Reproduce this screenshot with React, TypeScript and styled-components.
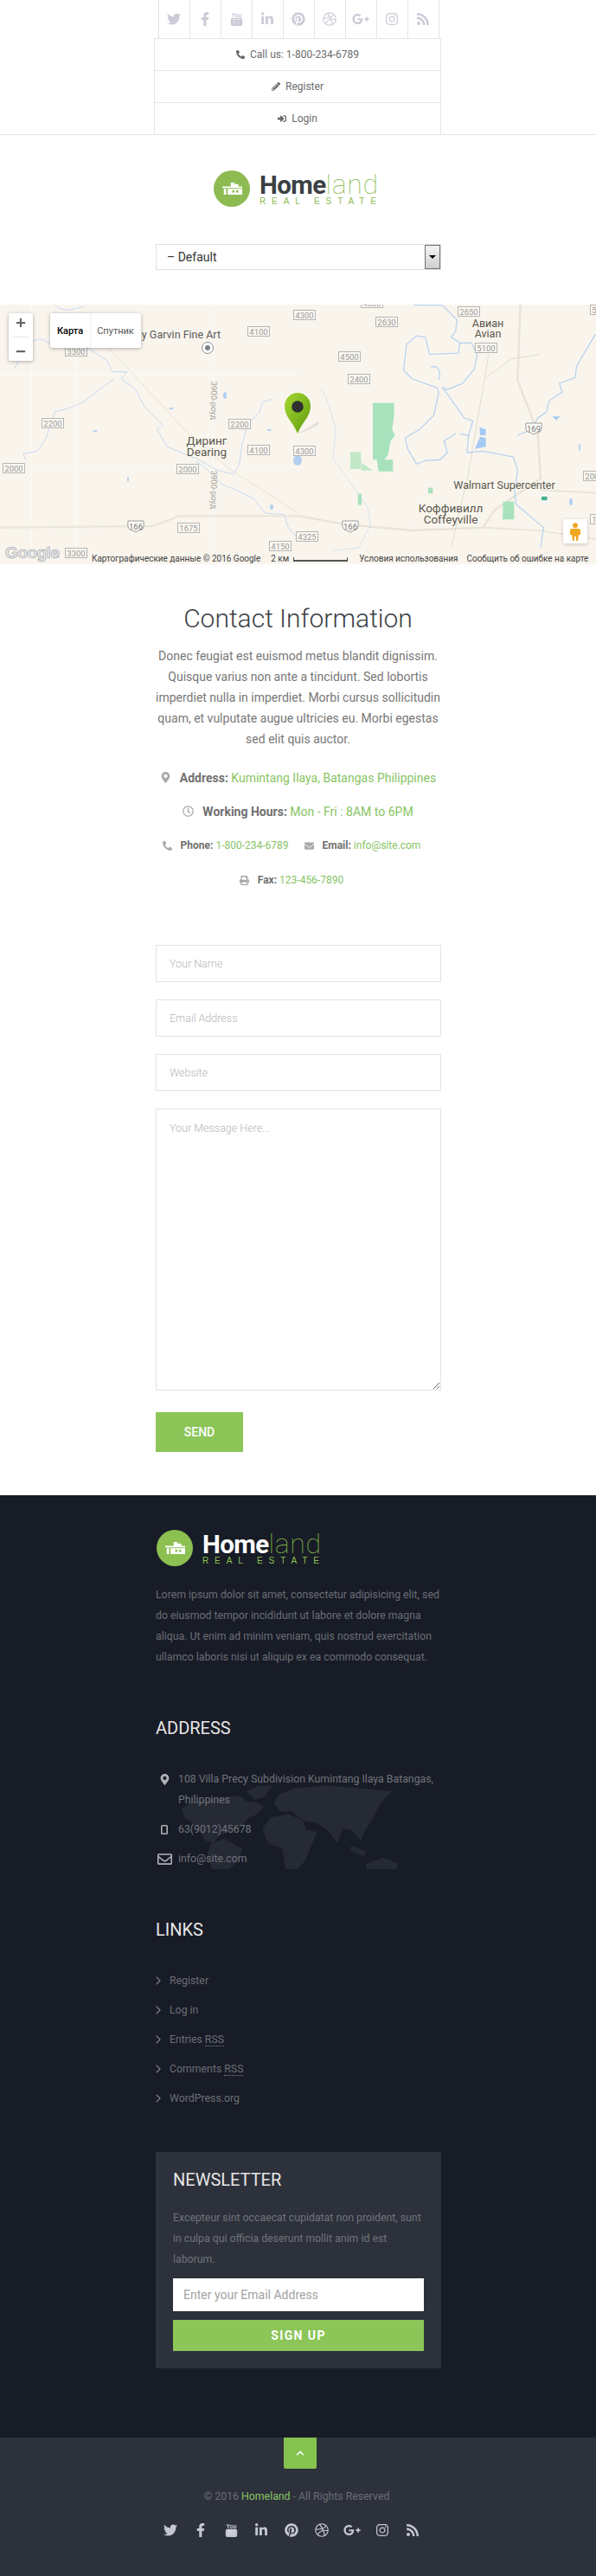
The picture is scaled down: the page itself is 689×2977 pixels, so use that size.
import React from 'react';
import styled, { createGlobalStyle } from 'styled-components';
import {
  FaTwitter,
  FaFacebookF,
  FaLinkedinIn,
  FaPinterest,
  FaDribbble,
  FaGooglePlusG,
  FaInstagram,
  FaRss,
  FaPhoneAlt,
  FaPencilAlt,
  FaSignInAlt,
  FaMapMarkerAlt,
  FaRegClock,
  FaEnvelope,
  FaPrint,
  FaRegEnvelope,
  FaPlus,
  FaMinus,
} from 'react-icons/fa';
import { ChevronRight, ChevronUp } from 'lucide-react';

const LINK = '#88c464';

const GlobalStyle = createGlobalStyle`
  html, body {
    margin: 0;
    padding: 0;
    background: #fff;
    font-family: Roboto, "Liberation Sans", sans-serif;
  }
  * { box-sizing: border-box; }
`;

const Page = styled.div`
  width: 689px;
  height: 2977px;
  overflow: hidden;
`;

const TopBar = styled.header`
  height: 156px;
  border-bottom: 1px solid #e5e5e5;
`;

const SocialRow = styled.div`
  display: flex;
  justify-content: center;
  height: 44px;
  padding-left: 1px;
`;

const SocialCell = styled.a`
  width: 36px;
  display: flex;
  align-items: center;
  justify-content: center;
  color: #ccccd8;
  font-size: 16px;
  border-right: 1px solid #e5e5e5;
  &:first-child { border-left: 1px solid #e5e5e5; width: 37px; }
`;

const TopLinks = styled.div`
  width: 332px;
  margin-left: 178px;
  border-left: 1px solid #e5e5e5;
  border-right: 1px solid #e5e5e5;
`;

const TopLink = styled.a`
  height: 37px;
  display: flex;
  align-items: center;
  justify-content: center;
  gap: 6px;
  font-size: 12px;
  color: #6b6b6b;
  border-top: 1px solid #e5e5e5;
  svg { font-size: 10px; color: #666; }
`;

const LogoWrap = styled.div<{ $left: number }>`
  display: flex;
  align-items: center;
  gap: 11px;
  padding-left: ${(p) => p.$left}px;
`;

const LogoBadge = styled.div`
  width: 42px;
  height: 42px;
  border-radius: 50%;
  background: #8dbb52;
  display: flex;
  align-items: center;
  justify-content: center;
`;

const FooterBadge = styled(LogoBadge)`
  background: #8cc152;
`;

const LogoText = styled.div`
  display: flex;
  flex-direction: column;
`;

const LogoWord = styled.div<{ $dark?: boolean }>`
  font-size: 29.5px;
  line-height: 28px;
  font-weight: 700;
  letter-spacing: -0.6px;
  color: ${(p) => (p.$dark ? '#ffffff' : '#3a4043')};
  span {
    font-size: 32px;
    font-weight: 100;
    color: ${(p) => (p.$dark ? '#7cb644' : '#8dbb52')};
    letter-spacing: 0.6px;
  }
`;

const LogoTag = styled.div<{ $dark?: boolean }>`
  font-family: "Liberation Sans", sans-serif;
  font-size: 10px;
  line-height: 9px;
  letter-spacing: 6.9px;
  white-space: nowrap;
  color: ${(p) => (p.$dark ? '#8cc152' : '#8dbb52')};
`;

const HeaderLogo = styled.div`
  padding-top: 41px;
`;

const SelectWrap = styled.div`
  margin: 43px 0 0 180px;
  width: 330px;
  height: 30px;
  border: 1px solid #e0e0e0;
  display: flex;
  align-items: center;
  justify-content: space-between;
  font-size: 14px;
  color: #333;
  padding-left: 12px;
`;

const SelectArrow = styled.div`
  width: 18px;
  height: 28px;
  border: 1px solid #707070;
  background: linear-gradient(#f4f4f4, #cfcfcf);
  display: flex;
  align-items: center;
  justify-content: center;
  &::after {
    content: '';
    border-left: 4px solid transparent;
    border-right: 4px solid transparent;
    border-top: 4px solid #000;
  }
`;

const MapBox = styled.section`
  position: relative;
  margin-top: 40px;
  height: 300px;
  background: #f9f5ed;
  overflow: hidden;
`;

const MapSvg = styled.svg`
  display: block;
`;

const ZoomControl = styled.div`
  position: absolute;
  left: 10px;
  top: 10px;
  width: 28px;
  height: 55px;
  background: #fff;
  border-radius: 2px;
  box-shadow: 0 1px 4px rgba(0, 0, 0, 0.3);
  display: flex;
  flex-direction: column;
  align-items: center;
  justify-content: space-around;
  color: #666;
  font-size: 12px;
`;

const ZoomDivider = styled.div`
  width: 20px;
  height: 1px;
  background: #e6e6e6;
`;

const MapTypes = styled.div`
  position: absolute;
  left: 58px;
  top: 10px;
  height: 40px;
  display: flex;
  background: #fff;
  border-radius: 2px;
  box-shadow: 0 1px 4px rgba(0, 0, 0, 0.3);
`;

const MapType = styled.div<{ $active?: boolean }>`
  display: flex;
  align-items: center;
  justify-content: center;
  width: ${(p) => (p.$active ? 46 : 59)}px;
  font-size: 11px;
  font-weight: ${(p) => (p.$active ? 500 : 400)};
  color: ${(p) => (p.$active ? '#000' : '#565656')};
  box-shadow: ${(p) => (p.$active ? '1px 0 2px rgba(0,0,0,0.08)' : 'none')};
`;

const PegMan = styled.div`
  position: absolute;
  left: 651px;
  top: 248px;
  width: 28px;
  height: 28px;
  background: #fff;
  border-radius: 2px;
  box-shadow: 0 1px 4px rgba(0, 0, 0, 0.2);
  display: flex;
  align-items: center;
  justify-content: center;
`;

const GoogleMark = styled.div`
  position: absolute;
  left: 6px;
  top: 276px;
  font-family: "Liberation Sans", sans-serif;
  font-size: 19px;
  line-height: 22px;
  font-weight: 700;
  letter-spacing: -0.5px;
  color: #e8eaee;
  -webkit-text-stroke: 0.6px #9a9da1;
`;

const Attribution = styled.div`
  position: absolute;
  left: 106px;
  right: 0;
  top: 287px;
  height: 13px;
  display: flex;
  align-items: center;
  font-size: 10px;
  color: #444;
  white-space: nowrap;
  background: rgba(249, 245, 237, 0.7);
`;

const AttrText = styled.span<{ $left?: number }>`
  margin-left: ${(p) => p.$left ?? 0}px;
  letter-spacing: -0.02px;
`;

const ScaleBar = styled.span`
  display: inline-block;
  width: 63px;
  height: 5px;
  margin: 1px 0 0 5px;
  border: 1px solid #555;
  border-width: 0 1px 2px 1px;
`;

const Contact = styled.section`
  width: 340px;
  margin: 0 auto;
  padding-top: 45px;
  text-align: center;
`;

const ContactTitle = styled.h2`
  margin: 0;
  font-size: 30px;
  line-height: 36px;
  font-weight: 300;
  color: #3c4146;
`;

const ContactText = styled.p`
  margin: 13px 0 0;
  font-size: 14px;
  line-height: 24px;
  color: #777;
`;

const InfoList = styled.div`
  margin-top: 13px;
  display: flex;
  flex-direction: column;
`;

const InfoRow = styled.div<{ $small?: boolean }>`
  height: ${(p) => (p.$small ? 40 : 39)}px;
  display: flex;
  justify-content: center;
  align-items: center;
  gap: 18px;
  padding-right: ${(p) => (p.$small ? 15 : 0)}px;
  font-size: ${(p) => (p.$small ? 12 : 14)}px;
  white-space: nowrap;
`;

const InfoItem = styled.div<{ $small?: boolean }>`
  display: flex;
  align-items: center;
  gap: 10px;
  color: ${LINK};
  b { color: #6f6f6f; font-weight: 700; }
  svg { color: #a9a9a9; font-size: ${(p) => (p.$small ? 11 : 13)}px; }
`;

const ContactForm = styled.form`
  width: 330px;
  margin: 55px 0 0 180px;
  display: flex;
  flex-direction: column;
  gap: 20px;
`;

const TextInput = styled.input`
  width: 330px;
  height: 43px;
  padding: 0 15px;
  border: 1px solid #e3e3e3;
  background: #fff;
  font-family: Roboto, sans-serif;
  font-size: 12.5px;
  font-weight: 300;
  &::placeholder { color: #b5b5b5; opacity: 1; }
`;

const MessageInput = styled.textarea`
  width: 330px;
  height: 326px;
  padding: 14px 15px;
  border: 1px solid #e3e3e3;
  background: #fff;
  font-family: Roboto, sans-serif;
  font-size: 12.5px;
  font-weight: 300;
  &::placeholder { color: #b5b5b5; opacity: 1; }
`;

const SendButton = styled.button`
  width: 101px;
  height: 46px;
  margin-top: 5px;
  border: 0;
  background: #8cc558;
  color: #fff;
  font-family: Roboto, sans-serif;
  font-size: 14px;
  font-weight: 500;
`;

const Footer = styled.footer`
  margin-top: 50px;
  height: 1089px;
  background: #181c27;
  padding: 40px 0 0 180px;
`;

const FooterCol = styled.div`
  width: 330px;
`;

const FooterText = styled.p`
  margin: 21px 0 0;
  font-size: 12.3px;
  line-height: 24px;
  color: #6c6e75;
`;

const FooterHead = styled.h3<{ $top: number }>`
  margin: ${(p) => p.$top}px 0 0;
  font-size: 20px;
  line-height: 24px;
  font-weight: 400;
  color: #e6e6e6;
`;

const AddressList = styled.div`
  position: relative;
  margin-top: 35px;
  height: 116px;
`;

const WorldMap = styled.svg`
  position: absolute;
  left: 10px;
  top: 6px;
`;

const AddressRow = styled.div<{ $gap: number }>`
  position: relative;
  display: flex;
  margin-bottom: ${(p) => p.$gap}px;
  font-size: 12.3px;
  line-height: 24px;
  color: #71737a;
`;

const AddressIcon = styled.div`
  flex: 0 0 20px;
  width: 20px;
  height: 24px;
  margin-right: 6px;
  display: flex;
  align-items: center;
  justify-content: center;
  color: #aeb0b5;
  font-size: 13px;
`;

const LinkList = styled.ul`
  list-style: none;
  margin: 30px 0 0;
  padding: 0;
`;

const LinkItem = styled.li`
  height: 34px;
  display: flex;
  align-items: center;
  gap: 5px;
  font-size: 12.3px;
  color: #6c6e75;
  margin-left: -5px;
  svg { color: #80828a; }
  abbr { margin-left: 3px; border-bottom: 1px dotted #80828a; text-decoration: none; line-height: 12px; }
`;

const Newsletter = styled.div`
  margin-top: 45px;
  width: 330px;
  height: 250px;
  background: #2d313b;
  padding: 20px;
`;

const NewsHead = styled.h3`
  margin: 0;
  font-size: 20px;
  line-height: 24px;
  font-weight: 400;
  color: #e6e6e6;
`;

const NewsText = styled.p`
  margin: 20px 0 0;
  font-size: 12.3px;
  line-height: 24px;
  color: #71737a;
`;

const NewsInput = styled.input`
  display: block;
  width: 290px;
  height: 38px;
  margin-top: 10px;
  padding: 0 12px;
  border: 0;
  background: #fff;
  font-family: Roboto, sans-serif;
  font-size: 14px;
  &::placeholder { color: #a2a2a2; opacity: 1; }
`;

const NewsButton = styled.button`
  display: block;
  width: 290px;
  height: 36px;
  margin-top: 10px;
  border: 0;
  background: #8cc558;
  color: #fff;
  font-family: Roboto, sans-serif;
  font-size: 14px;
  font-weight: 700;
  letter-spacing: 1.4px;
`;

const BottomBar = styled.div`
  height: 160px;
  background: #2d313b;
  display: flex;
  flex-direction: column;
  align-items: center;
`;

const ToTop = styled.a`
  width: 38px;
  height: 36px;
  margin-left: 5px;
  background: #85c34e;
  border-radius: 0 0 2px 2px;
  color: #fff;
  display: flex;
  align-items: center;
  justify-content: center;
`;

const Copyright = styled.div`
  margin-top: 20px;
  margin-right: 3px;
  font-size: 12.3px;
  line-height: 24px;
  color: #6c6e75;
  a { color: #88c464; }
`;

const FootSocial = styled.div`
  margin-top: 15px;
  margin-right: 15px;
  display: flex;
`;

const FootSocialItem = styled.a`
  width: 35px;
  height: 24px;
  display: flex;
  align-items: center;
  justify-content: center;
  color: #c3c7d4;
  font-size: 16px;
`;

const YoutubeIcon = () => (
  <svg width="15" height="16" viewBox="0 0 15 16" fill="currentColor">
    <text x="7.5" y="5.6" textAnchor="middle" fontSize="6.5" fontWeight="700" fontFamily="'Liberation Sans Narrow','Liberation Sans',sans-serif">You</text>
    <rect x="0.8" y="6.8" width="13.4" height="9.2" rx="2" />
    <path d="M3 8.5h9M4.5 8.5v5.5M7 10.5v3M10 10.5v3" stroke="#fff" strokeOpacity="0.55" strokeWidth="0.8" fill="none" />
  </svg>
);

const MobileIcon = () => (
  <svg width="8" height="11" viewBox="0 0 8 11" fill="none" stroke="currentColor" strokeWidth="1.6">
    <rect x="0.8" y="0.8" width="6.4" height="9.4" rx="0.8" />
  </svg>
);

const socials = [
  <FaTwitter key="tw" />,
  <FaFacebookF key="fb" />,
  <YoutubeIcon key="yt" />,
  <FaLinkedinIn key="in" />,
  <FaPinterest key="pin" />,
  <FaDribbble key="dr" />,
  <FaGooglePlusG key="gp" size={20} />,
  <FaInstagram key="ig" />,
  <FaRss key="rss" />,
];

const HouseIcon = ({ size }: { size: number }) => (
  <svg width={size} height={size * 0.62} viewBox="0 0 26 16" fill="#fff">
    <path d="M11 0h5v2h5v3h5v2H0V5h11z" />
    <path d="M2 8h3v8H2zM7 8h19v8H7zM13 10v3h3v-3zM18 10v3h3v-3z" fillRule="evenodd" />
  </svg>
);

const Logo = ({ dark, left }: { dark?: boolean; left: number }) => {
  const Badge = dark ? FooterBadge : LogoBadge;
  return (
    <LogoWrap $left={left}>
      <Badge>
        <HouseIcon size={23} />
      </Badge>
      <LogoText>
        <LogoWord $dark={dark}>
          Home<span>land</span>
        </LogoWord>
        <LogoTag $dark={dark}>REAL ESTATE</LogoTag>
      </LogoText>
    </LogoWrap>
  );
};

const roadBoxes: [string, number, number][] = [
  ['4100', 299, 31], ['3300', 88, 54], ['2200', 61, 137], ['2200', 277, 138],
  ['4100', 299, 168], ['2000', 16, 189], ['2000', 217, 190], ['1675', 218, 258],
  ['4150', 324, 279], ['3300', 88, 287], ['4300', 352, 12], ['4300', 352, 169],
  ['2650', 542, 8], ['2630', 447, 20], ['4500', 404, 60], ['2400', 415, 86],
  ['5100', 562, 50], ['4325', 355, 268], ['2000', 687, 198], ['1800', 695, 248],
  ['5500', 695, 6], ['4300', 430, -2],
];

const shields: [string, number, number][] = [
  ['166', 157, 256], ['166', 405, 256], ['169', 617, 143],
];

const placeLabels: [string, number, number, number][] = [
  ['Диринг', 239, 162, 13.5], ['Dearing', 239, 175, 13.5],
  ['Авиан', 564, 26, 12.5], ['Avian', 564, 38, 12.5],
  ['Walmart Supercenter', 583, 213, 12.5],
  ['Коффивилл', 521, 240, 13.5], ['Coffeyville', 521, 253, 13.5],
];

const leftWater = [
  'M190,38 C210,60 240,60 295,42',
  'M50,260 L65,230 L90,170 L140,155 L170,170 L230,170 L310,190 L370,230 L390,270 L440,270 L420,295 L470,330 L500,390 L550,440 L565,455 L545,470 L580,530 L640,555 L680,570 L750,610 L810,625 L830,590 L840,520 L860,450 L900,410 L910,375 L945,365',
  'M395,295 L340,335 L290,375 L240,395 L190,410 L160,500 L130,545 L80,555 L90,575',
  'M680,580 L720,610 L770,660 L820,680 L880,710 L920,760 L985,765 L1000,810 L1035,850',
];

const rightWaterThick = [
  'M400,38 L500,40 L550,90 L545,130 L530,150 L560,170',
  'M440,150 L410,145 L375,175 L365,265 L395,295 L480,325 L487,340 L470,420 L420,470 L370,500 L380,540 L410,590 L440,578 L490,575 L517,550 L505,510 L545,485',
  'M440,150 L455,210 L555,205 L560,170 L600,170 L620,210 L610,260 L570,310 L515,332 L500,325 L540,380 L575,430 L605,440 L590,490 L560,485',
  'M590,490 L585,550 L640,545 L745,565 L760,610 L750,690 L755,730 L850,810 L840,880',
  'M1030,140 L965,250 L960,290 L905,310 L915,340 L870,370 L860,410 L830,430 L810,470 L760,490',
  'M460,255 C480,245 495,260 488,298',
];

const greenPatches: [string, string][] = [
  ['258,378 332,378 332,420 325,470 335,490 320,510 310,560 298,575 328,575 328,615 278,615 272,575 258,575', '#a8e2bd'],
  ['180,548 217,548 217,607 180,607', '#c2e8c8'],
  ['218,585 258,612 218,612', '#c2e8c8'],
  ['450,672 466,672 466,692 450,692', '#a8e2bd'],
  ['206,693 219,693 219,732 206,732', '#a8e2bd'],
  ['710,720 748,720 748,782 708,782', '#a8e2bd'],
];

const MapDrawing = () => (
  <MapSvg width="689" height="300" viewBox="0 0 689 300">
    <defs>
      <linearGradient id="pin" x1="0" y1="0" x2="1" y2="1">
        <stop offset="0" stopColor="#a6d832" />
        <stop offset="1" stopColor="#5f9a0e" />
      </linearGradient>
    </defs>
    <g transform="translate(0,-12.33) scale(.3333)" fill="none">
      <path d="M110,40V900M265,40V900M740,40V900M0,280H1035M0,600H1035" stroke="#fdfbf6" strokeWidth="3" />
      <path d="M0,810 L530,805 L620,770 L1035,770" stroke="#ebe6da" strokeWidth="7" />
      <path d="M370,180 L640,470 L800,610 L1035,760" stroke="#dedacd" strokeWidth="2" />
      {leftWater.map((d) => (
        <path key={d} d={d} stroke="#bcd4ee" strokeWidth="2.5" />
      ))}
    </g>
    <g transform="translate(345,-12.33) scale(.3333)" fill="none">
      <path d="M770,38 L760,300 L830,480 L840,640 L680,750 L640,810 L400,820 L170,800 L0,770" stroke="#e8e3d6" strokeWidth="7" />
      <path d="M640,810 L830,820 L1032,850M1032,690 L840,680" stroke="#e8e3d6" strokeWidth="5" />
      <path d="M660,210 L590,620 L530,880 M650,290 L740,225 L835,210" stroke="#e2ddd0" strokeWidth="3" />
      {greenPatches.map(([points, color]) => (
        <polygon key={points} points={points} fill={color} />
      ))}
      <polygon points="628,462 650,470 650,490 630,490" fill="#a4c9f2" />
      <polygon points="630,495 650,500 650,530 612,537" fill="#a4c9f2" />
      <polygon points="880,425 908,425 895,438" fill="#a4c9f2" />
      {rightWaterThick.map((d) => (
        <path key={d} d={d} stroke="#b3d0f0" strokeWidth="3.5" />
      ))}
      <path d="M80,330 L100,370 L130,470 L120,570 L170,640 L240,740 L250,800 L210,880 L120,890" stroke="#bcd4ee" strokeWidth="2" strokeDasharray="6 1" />
      <circle cx="853" cy="708" r="17" fill="#fff" stroke="#ccc" />
      <rect x="843" y="702" width="20" height="14" rx="2" fill="#4caf8a" />
    </g>
    {/* small ponds */}
    <g fill="#b3d0f0">
      <ellipse cx="260" cy="105" rx="2" ry="4" />
      <ellipse cx="198" cy="120" rx="3" ry="1" />
      <ellipse cx="110" cy="146" rx="3" ry="1" />
      <ellipse cx="148" cy="202" rx="1" ry="3" />
      <ellipse cx="314" cy="234" rx="2" ry="3" />
      <ellipse cx="344" cy="180" rx="5" ry="6" />
      <ellipse cx="670" cy="165" rx="1" ry="4" />
      <ellipse cx="311" cy="145" rx="3" ry="1" />
      <ellipse cx="660" cy="228" rx="2" ry="4" />
    </g>
    <text x="255" y="38.5" textAnchor="end" fontSize="12.5" fill="#5a5a5a" fontFamily="Roboto, sans-serif">y Garvin Fine Art</text>
    <circle cx="240" cy="50" r="6.5" fill="#fff" stroke="#8a8f94" />
    <circle cx="240" cy="50" r="3" fill="#7a8288" />
    {placeLabels.map(([label, x, y, size]) => (
      <text key={label} x={x} y={y} textAnchor="middle" fontSize={size} fill="#5a574e" fontFamily="Roboto, sans-serif">
        {label}
      </text>
    ))}
    {[111, 214].map((y) => (
      <text key={y} x={247} y={y} transform={`rotate(90 247 ${y})`} textAnchor="middle" dominantBaseline="middle" fontSize="9.5" fill="#a5a29a" fontFamily="Roboto, sans-serif">
        3900-роуд
      </text>
    ))}
    {roadBoxes.map(([n, x, y]) => (
      <g key={`${n}-${x}`}>
        <rect x={x - 12.5} y={y - 5.5} width="25" height="11" fill="#fbf8f1" stroke="#b5b5b5" strokeWidth="1" />
        <text x={x} y={y + 3.5} textAnchor="middle" fontSize="9.5" fill="#9a9a9a" fontFamily="Roboto, sans-serif">{n}</text>
      </g>
    ))}
    {shields.map(([n, x, y]) => (
      <g key={`${n}-${x}`}>
        <path d={`M${x - 9},${y - 6} h18 q1,8 -2,10 q-4,1 -7,3 q-3,-2 -7,-3 q-3,-2 -2,-10z`} fill="#fdfbf6" stroke="#9a9a9a" strokeWidth="1" />
        <text x={x} y={y + 3.5} textAnchor="middle" fontSize="9.5" fill="#777" fontFamily="Roboto, sans-serif">{n}</text>
      </g>
    ))}
    <path d="M345,149 L368,135 C372,138 360,145 345,149z" fill="#000" opacity="0.08" />
    <path d="M344,149 C339,136 329,130 329,117 A15,15 0 1 1 359,117 C359,130 349,136 344,149z" fill="url(#pin)" />
    <circle cx="344" cy="118" r="6.8" fill="#2f2f2f" />
  </MapSvg>
);

const PegIcon = () => (
  <svg width="12" height="21" viewBox="0 0 12 21" fill="#f0a821">
    <circle cx="6" cy="3.2" r="3" />
    <path d="M2 7h8q2 0 2 2v5h-2l-1 7H7v-5H5v5H3l-1-7H0V9q0-2 2-2z" />
  </svg>
);

const WorldDrawing = () => (
  <WorldMap width="290" height="110" viewBox="0 0 870 330" fill="#262a35">
    <path d="M60,120 L100,95 L180,85 L260,75 L285,95 L320,100 L345,115 L320,140 L290,155 L260,190 L220,200 L190,215 L170,240 L140,230 L110,180 L70,150z" />
    <path d="M285,60 L330,40 L375,42 L345,80 L315,90z" />
    <path d="M160,240 L210,225 L270,260 L255,300 L225,330 L165,330 L150,280z" />
    <path d="M340,190 L370,150 L430,140 L480,160 L492,195 L530,200 L505,260 L490,300 L460,330 L420,330 L410,260 L360,240z" />
    <path d="M380,100 L400,70 L450,50 L560,40 L680,50 L790,60 L760,90 L740,120 L720,160 L700,190 L680,230 L650,195 L620,190 L600,240 L570,200 L530,170 L490,165 L440,130 L400,130z" />
    <path d="M650,250 L700,270 L690,285 L640,265z" />
    <path d="M700,312 L760,290 L810,310 L805,330 L700,330z" />
  </WorldMap>
);

const App: React.FC = () => {
  return (
    <Page>
      <GlobalStyle />
      <TopBar>
        <SocialRow>
          {socials.map((icon) => (
            <SocialCell key={icon.key}>{icon}</SocialCell>
          ))}
        </SocialRow>
        <TopLinks>
          <TopLink><FaPhoneAlt /> Call us: 1-800-234-6789</TopLink>
          <TopLink><FaPencilAlt /> Register</TopLink>
          <TopLink><FaSignInAlt /> Login</TopLink>
        </TopLinks>
      </TopBar>

      <HeaderLogo>
        <Logo left={247} />
      </HeaderLogo>

      <SelectWrap>
        <span>– Default</span>
        <SelectArrow />
      </SelectWrap>

      <MapBox>
        <MapDrawing />
        <ZoomControl>
          <FaPlus />
          <ZoomDivider />
          <FaMinus />
        </ZoomControl>
        <MapTypes>
          <MapType $active>Карта</MapType>
          <MapType>Спутник</MapType>
        </MapTypes>
        <PegMan><PegIcon /></PegMan>
        <GoogleMark>Google</GoogleMark>
        <Attribution>
          <AttrText>Картографические данные © 2016 Google</AttrText>
          <AttrText $left={12}>2 км</AttrText>
          <ScaleBar />
          <AttrText $left={13}>Условия использования</AttrText>
          <AttrText $left={10}>Сообщить об ошибке на карте</AttrText>
        </Attribution>
      </MapBox>

      <Contact>
        <ContactTitle>Contact Information</ContactTitle>
        <ContactText>
          Donec feugiat est euismod metus blandit dignissim. Quisque varius non ante a tincidunt. Sed lobortis imperdiet nulla in imperdiet. Morbi cursus sollicitudin quam, et vulputate augue ultricies eu. Morbi egestas sed elit quis auctor.
        </ContactText>
        <InfoList>
          <InfoRow>
            <InfoItem><FaMapMarkerAlt /><span><b>Address:</b> Kumintang Ilaya, Batangas Philippines</span></InfoItem>
          </InfoRow>
          <InfoRow>
            <InfoItem><FaRegClock /><span><b>Working Hours:</b> Mon - Fri : 8AM to 6PM</span></InfoItem>
          </InfoRow>
          <InfoRow $small>
            <InfoItem $small><FaPhoneAlt /><span><b>Phone:</b> 1-800-234-6789</span></InfoItem>
            <InfoItem $small><FaEnvelope /><span><b>Email:</b> info@site.com</span></InfoItem>
          </InfoRow>
          <InfoRow $small>
            <InfoItem $small><FaPrint /><span><b>Fax:</b> 123-456-7890</span></InfoItem>
          </InfoRow>
        </InfoList>
      </Contact>

      <ContactForm>
        <TextInput placeholder="Your Name" />
        <TextInput placeholder="Email Address" />
        <TextInput placeholder="Website" />
        <MessageInput placeholder="Your Message Here..." />
        <SendButton type="button">SEND</SendButton>
      </ContactForm>

      <Footer>
        <FooterCol>
          <Logo dark left={1} />
          <FooterText>
            Lorem ipsum dolor sit amet, consectetur adipisicing elit, sed do eiusmod tempor incididunt ut labore et dolore magna aliqua. Ut enim ad minim veniam, quis nostrud exercitation ullamco laboris nisi ut aliquip ex ea commodo consequat.
          </FooterText>

          <FooterHead $top={58}>ADDRESS</FooterHead>
          <AddressList>
            <WorldDrawing />
            <AddressRow $gap={10}>
              <AddressIcon><FaMapMarkerAlt /></AddressIcon>
              <span>108 Villa Precy Subdivision Kumintang Ilaya Batangas, Philippines</span>
            </AddressRow>
            <AddressRow $gap={10}>
              <AddressIcon><MobileIcon /></AddressIcon>
              <span>63(9012)45678</span>
            </AddressRow>
            <AddressRow $gap={0}>
              <AddressIcon><FaRegEnvelope size={17} /></AddressIcon>
              <span>info@site.com</span>
            </AddressRow>
          </AddressList>

          <FooterHead $top={58}>LINKS</FooterHead>
          <LinkList>
            <LinkItem><ChevronRight size={16} strokeWidth={1.6} /> Register</LinkItem>
            <LinkItem><ChevronRight size={16} strokeWidth={1.6} /> Log in</LinkItem>
            <LinkItem><ChevronRight size={16} strokeWidth={1.6} /><span>Entries<abbr>RSS</abbr></span></LinkItem>
            <LinkItem><ChevronRight size={16} strokeWidth={1.6} /><span>Comments<abbr>RSS</abbr></span></LinkItem>
            <LinkItem><ChevronRight size={16} strokeWidth={1.6} /> WordPress.org</LinkItem>
          </LinkList>

          <Newsletter>
            <NewsHead>NEWSLETTER</NewsHead>
            <NewsText>Excepteur sint occaecat cupidatat non proident, sunt in culpa qui officia deserunt mollit anim id est laborum.</NewsText>
            <NewsInput placeholder="Enter your Email Address" />
            <NewsButton type="button">SIGN UP</NewsButton>
          </Newsletter>
        </FooterCol>
      </Footer>

      <BottomBar>
        <ToTop><ChevronUp size={14} strokeWidth={2.6} /></ToTop>
        <Copyright>© 2016 <a>Homeland</a> - All Rights Reserved</Copyright>
        <FootSocial>
          {socials.map((icon) => (
            <FootSocialItem key={icon.key}>{icon}</FootSocialItem>
          ))}
        </FootSocial>
      </BottomBar>
    </Page>
  );
};

export default App;
